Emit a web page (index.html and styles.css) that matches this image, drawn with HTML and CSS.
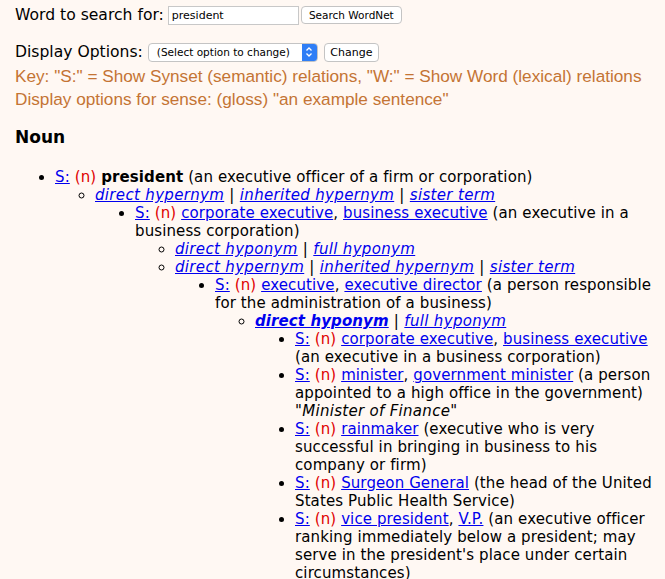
FILE: index.html
```html
<!DOCTYPE html>
<html>
<head>
<meta charset="utf-8">
<link rel="stylesheet" href="styles.css">
</head>
<body>
<form class="row search-row">
  <label class="label">Word to search for:</label>
  <input class="text-input" type="text" value="president">
  <button class="btn btn-search" type="button">Search WordNet</button>
</form>
<form class="row options-row">
  <label class="label">Display Options:</label>
  <div class="select">
    <span class="select-text">(Select option to change)</span>
    <span class="select-arrow"><svg width="8" height="12" viewBox="0 0 8 12"><path d="M1.5 4.5 L4 2 L6.5 4.5 M1.5 7.5 L4 10 L6.5 7.5" fill="none" stroke="#fff" stroke-width="1.3"/></svg></span>
  </div>
  <button class="btn btn-change" type="button">Change</button>
</form>
<div class="key key-first">Key: "S:" = Show Synset (semantic) relations, "W:" = Show Word (lexical) relations</div>
<div class="key">Display options for sense: (gloss) "an example sentence"</div>
<h3 class="pos">Noun</h3>
<ul class="l1 top">
  <li><a href="#">S:</a> <span class="pn">(n)</span> <b>president</b> (an executive officer of a firm or corporation)
    <ul class="l2">
      <li><i class="rel"><a href="#">direct hypernym</a> | <a href="#">inherited hypernym</a> | <a href="#">sister term</a></i>
        <ul class="l1">
          <li><a href="#">S:</a> <span class="pn">(n)</span> <a href="#">corporate executive</a>, <a href="#">business executive</a> (an executive in a business corporation)
            <ul class="l2">
              <li><i class="rel"><a href="#">direct hyponym</a> | <a href="#">full hyponym</a></i></li>
              <li><i class="rel"><a href="#">direct hypernym</a> | <a href="#">inherited hypernym</a> | <a href="#">sister term</a></i>
                <ul class="l1">
                  <li><a href="#">S:</a> <span class="pn">(n)</span> <a href="#">executive</a>, <a href="#">executive director</a> (a person responsible for the administration of a business)
                    <ul class="l2">
                      <li><i class="rel"><b><a href="#">direct hyponym</a></b> | <a href="#">full hyponym</a></i>
                        <ul class="l1">
                          <li><a href="#">S:</a> <span class="pn">(n)</span> <a href="#">corporate executive</a>, <a href="#">business executive</a> (an executive in a business corporation)</li>
                          <li><a href="#">S:</a> <span class="pn">(n)</span> <a href="#">minister</a>, <a href="#">government minister</a> (a person appointed to a high office in the government) <i class="ex">"Minister of Finance"</i></li>
                          <li><a href="#">S:</a> <span class="pn">(n)</span> <a href="#">rainmaker</a> (executive who is very successful in bringing in business to his company or firm)</li>
                          <li><a href="#">S:</a> <span class="pn">(n)</span> <a href="#">Surgeon General</a> (the head of the United States Public Health Service)</li>
                          <li><a href="#">S:</a> <span class="pn">(n)</span> <a href="#">vice president</a>, <a href="#">V.P.</a> (an executive officer ranking immediately below a president; may serve in the president's place under certain circumstances)</li>
                        </ul>
                      </li>
                    </ul>
                  </li>
                </ul>
              </li>
            </ul>
          </li>
        </ul>
      </li>
    </ul>
  </li>
</ul>
</body>
</html>
```
FILE: styles.css
```css
html { background: #fff8f3; }
body {
  margin: 0;
  padding: 5px 4px 0 15px;
  font-family: "DejaVu Sans", Verdana, sans-serif;
  font-size: 15px;
  letter-spacing: 0.11px;
  color: #000;
  background: #fff8f3;
}
.row {
  display: flex;
  align-items: center;
  margin: 0;
}
.search-row { height: 20px; }
.options-row { height: 20px; margin-top: 17px; }
.label { font-size: 15.6px; letter-spacing: 0; margin-right: 5px; }
.search-row .label { margin-right: 4px; }
.text-input {
  width: 131px;
  height: 19px;
  box-sizing: border-box;
  border: 1px solid #c8c8c8;
  background: #fff;
  font: 11px "DejaVu Sans", sans-serif;
  padding: 0 3px;
  margin: 0 2px 0 0;
  outline: none;
}
.btn {
  height: 18px;
  box-sizing: border-box;
  border: 1px solid #c4c4c4;
  border-radius: 4px;
  background: #fff;
  font: 11px "DejaVu Sans", sans-serif;
  padding: 0;
  text-align: center;
  white-space: nowrap;
  color: #000;
  letter-spacing: 0;
}
.btn-search { width: 101px; font-size: 10.5px; }
.btn-change { width: 55px; height: 19px; }
.select {
  display: flex;
  align-items: center;
  width: 170px;
  height: 19px;
  box-sizing: border-box;
  border: 1px solid #c4c4c4;
  border-radius: 4px;
  background: #fff;
  margin-right: 6px;
  overflow: hidden;
}
.select-text {
  flex: 1;
  font: 10.5px "DejaVu Sans", sans-serif;
  letter-spacing: 0;
  padding-left: 8px;
}
.select-arrow {
  width: 15px;
  height: 100%;
  background: #2f7ef6;
  display: flex;
  align-items: center;
  justify-content: center;
}
.key {
  color: #c47434;
  font-family: "Liberation Sans", Arial, sans-serif;
  font-size: 17.2px;
  letter-spacing: 0;
  line-height: 23px;
}
.key-first { margin-top: 3px; }
.pos {
  font-size: 17px;
  font-weight: bold;
  letter-spacing: 0;
  margin: 14px 0 0 0;
  line-height: 24px;
}
ul { margin: 0; padding-left: 40px; line-height: 18px; }
ul.top { margin-top: 19px; }
ul.l1 { list-style-type: disc; }
ul.l2 { list-style-type: circle; }
a { color: #0000ee; }
.pn { color: #e00000; }
.rel { letter-spacing: 0.33px; }
.rel b { letter-spacing: 0.1px; }
.ex { letter-spacing: 0.3px; }
```
